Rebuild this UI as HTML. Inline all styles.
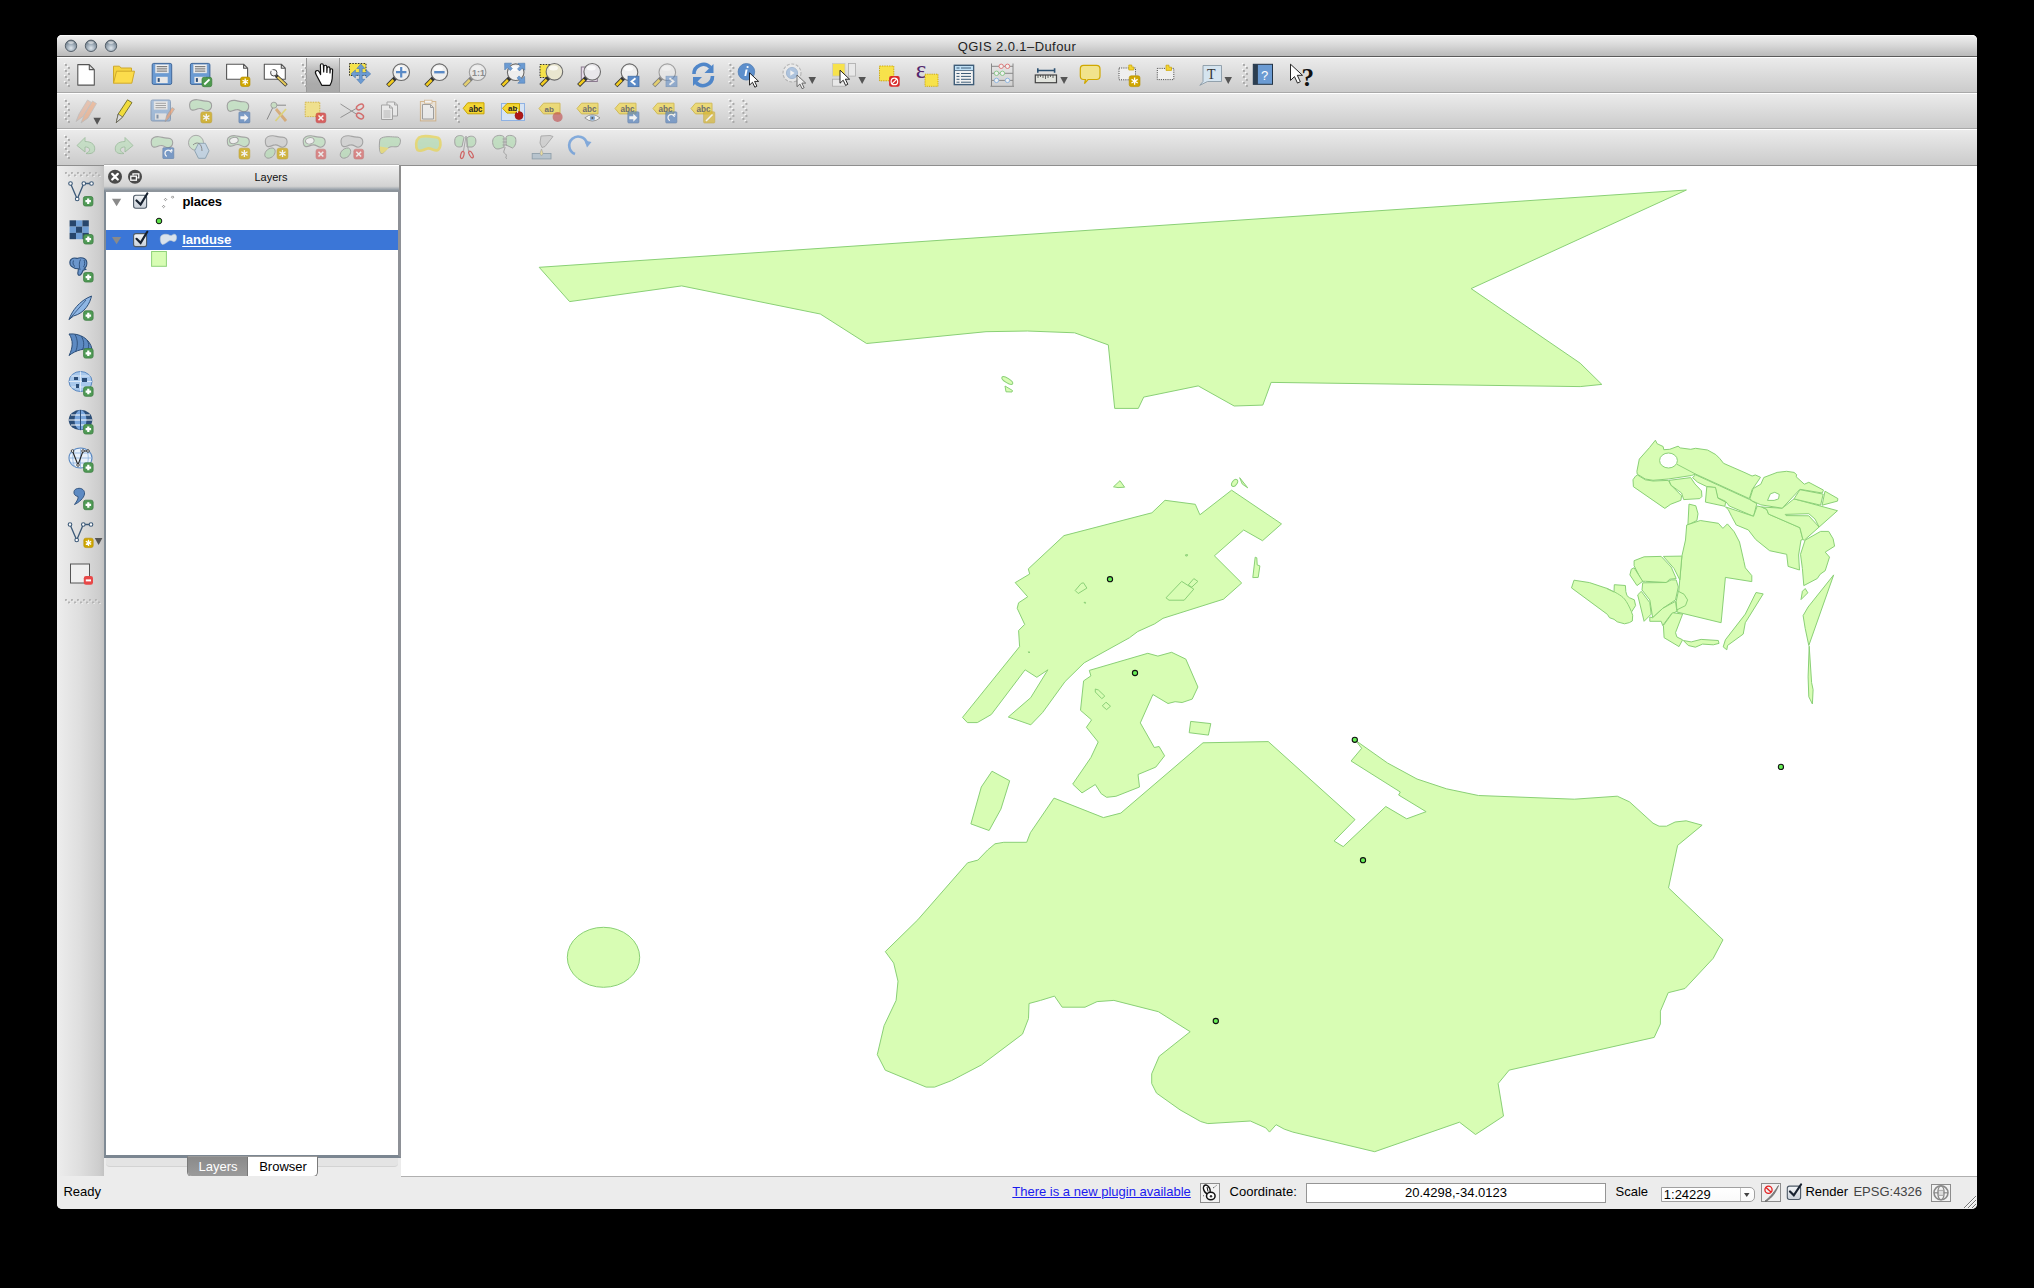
<!DOCTYPE html>
<html><head><meta charset="utf-8">
<style>
*{margin:0;padding:0;box-sizing:border-box}
html,body{width:2034px;height:1288px;overflow:hidden;background:#000;font-family:"Liberation Sans",sans-serif}
.a{position:absolute}
.t13{font-size:13px;line-height:15px;white-space:nowrap}
</style></head>
<body>
<!-- window background -->
<div class="a" style="left:57px;top:35px;width:1920px;height:1174px;background:#ececec;border-radius:5px 5px 5px 5px"></div>
<!-- title bar -->
<div class="a" style="left:57px;top:35px;width:1920px;height:22px;border-radius:5px 5px 0 0;background:linear-gradient(#f0f0f0,#dadada 45%,#bababa);border-bottom:1px solid #5a5a5a;box-shadow:inset 0 1px 0 #fbfbfb"></div>
<svg class="a" style="left:57px;top:35px" width="70" height="22" viewBox="0 0 70 22">
  <defs><radialGradient id="tl" cx="50%" cy="70%" r="60%"><stop offset="0" stop-color="#dfe6ec"/><stop offset="0.55" stop-color="#a3b0bc"/><stop offset="1" stop-color="#75838f"/></radialGradient></defs>
  <g fill="url(#tl)" stroke="#56616b" stroke-width="1"><circle cx="14" cy="10.8" r="5.7"/><circle cx="34" cy="10.8" r="5.7"/><circle cx="54" cy="10.8" r="5.7"/></g>
  <g fill="#fff" opacity="0.55"><ellipse cx="14" cy="7.6" rx="3" ry="1.3"/><ellipse cx="34" cy="7.6" rx="3" ry="1.3"/><ellipse cx="54" cy="7.6" rx="3" ry="1.3"/></g>
</svg>
<div class="a t13" style="left:57px;top:39px;width:1920px;text-align:center;color:#1e1e1e;letter-spacing:0.42px">QGIS 2.0.1–Dufour</div>

<!-- toolbar rows -->
<div class="a" style="left:57px;top:57px;width:1920px;height:36px;background:linear-gradient(#ececec,#cbcbcb);border-bottom:1px solid #a9a9a9;box-shadow:inset 0 1px 0 #fff"></div>
<div class="a" style="left:57px;top:93px;width:1920px;height:36px;background:linear-gradient(#ececec,#cbcbcb);border-bottom:1px solid #a9a9a9;box-shadow:inset 0 1px 0 #fff"></div>
<div class="a" style="left:57px;top:129px;width:1920px;height:37px;background:linear-gradient(#ececec,#cbcbcb);border-bottom:1px solid #8e8e8e;box-shadow:inset 0 1px 0 #fff"></div>
<!-- pressed pan button -->
<div class="a" style="left:306px;top:58px;width:34px;height:34px;background:linear-gradient(#e2e2e2,#bdbdbd 35%,#ababab 75%,#a9a9a9);box-shadow:inset 1px 0 0 #9a9a9a,inset -1px 0 0 #9a9a9a"></div>
<!-- checked label pin button -->
<div class="a" style="left:501px;top:103px;width:24px;height:18px;background:#d6e3f3;border:1px solid #8fb2e3"></div>


<!-- left vertical toolbar -->
<div class="a" style="left:57px;top:166px;width:47px;height:1011px;background:linear-gradient(90deg,#ededed,#dedede 50%,#cdcdcd 90%,#c2c2c2)"></div>

<!-- dock title -->
<div class="a" style="left:104px;top:164px;width:295px;height:26px;background:linear-gradient(#f0f0f0,#d2d2d2 85%,#8f99a3);box-shadow:inset 0 1px 0 #fff;border-top:1px solid #b2b2b2"></div>
<div class="a" style="left:399px;top:165px;width:2px;height:26px;background:#8e8e8e"></div>
<!-- tree -->
<div class="a" style="left:104px;top:190px;width:297px;height:968px;background:#fff;border-style:solid;border-color:#8e959c #8e9197 #7b8691 #7f8a94;border-width:2px 3px 3px 2px"></div>
<!-- tab pane -->
<div class="a" style="left:104px;top:1158px;width:297px;height:19px;background:#ececec"></div>
<div class="a" style="left:106px;top:1158px;width:292px;height:9px;background:#e4e4e4;border-bottom:1px solid #d3d3d3;border-radius:0 0 4px 4px"></div>

<svg class="a" style="left:105px;top:169px" width="40" height="16" viewBox="0 0 40 16">
  <circle cx="10" cy="7.7" r="7" fill="#4a4a4a"/>
  <path d="M7.2 4.9 L12.8 10.5 M12.8 4.9 L7.2 10.5" stroke="#fff" stroke-width="2.2" stroke-linecap="round"/>
  <circle cx="30" cy="7.7" r="7" fill="#4a4a4a"/>
  <rect x="25.8" y="7.2" width="5.6" height="4" fill="none" stroke="#fff" stroke-width="1.3"/>
  <path d="M28 6.4 V4.8 H33.8 V8.8 H32.4" fill="none" stroke="#fff" stroke-width="1.3"/>
</svg>
<div class="a" style="left:143px;top:170px;width:256px;text-align:center;font-size:11px;line-height:14px;color:#111">Layers</div>

<!-- tree rows -->
<div class="a" style="left:106px;top:230px;width:292px;height:20px;background:#3b76d7"></div>
<svg class="a" style="left:106px;top:192px" width="140" height="80" viewBox="0 0 140 80">
  <defs><linearGradient id="cbg" x1="0" y1="0" x2="0" y2="1"><stop offset="0" stop-color="#f4f6f8"/><stop offset="1" stop-color="#c9d0d8"/></linearGradient></defs>
  <path d="M6 6.7 H15.2 L10.6 14.2Z" fill="#8a8a8a"/>
  <path d="M6 44.9 H15.2 L10.6 52.2Z" fill="#8a8a8a"/>
  <rect x="27.6" y="3.3" width="13" height="13" rx="2.2" fill="url(#cbg)" stroke="#4d5966" stroke-width="1.1"/>
  <path d="M30.5 8.5 L34.6 12.6 L41.3 1.5" fill="none" stroke="#182230" stroke-width="2.2" stroke-linecap="round"/>
  <rect x="27.6" y="41.6" width="13" height="13" rx="2.2" fill="url(#cbg)" stroke="#4d5966" stroke-width="1.1"/>
  <path d="M30.5 46.8 L34.6 50.9 L41.3 39.8" fill="none" stroke="#182230" stroke-width="2.2" stroke-linecap="round"/>
  <g fill="none" stroke="#666" stroke-width="0.7"><path d="M58.3 7.5 l1.2 -1.2 l1.2 1.2 l-1.2 1.2z"/><path d="M65.4 5.1 l1.2 -1.2 l1.2 1.2 l-1.2 1.2z"/><path d="M56.4 14.5 l1.2 -1.2 l1.2 1.2 l-1.2 1.2z"/></g>
  <circle cx="53" cy="29" r="2.8" fill="#5ee04a" stroke="#111" stroke-width="1"/>
  <path d="M55 44 C57 41.5 62 42 64 43.5 C66 44 67 41.5 69 42.3 C71 43 71 47 69.5 49 C67.5 50.5 66 48 64 48.5 C62 49 59 52.5 56.5 52.5 C54.5 52 53.5 46 55 44Z" fill="#d9e2ec" stroke="#b9c6d2" stroke-width="0.6"/>
  <rect x="45.6" y="59.5" width="14.8" height="14.8" fill="#d8fdb4" stroke="#8fd27a" stroke-width="1"/>
</svg>
<div class="a t13" style="left:182.6px;top:194px;font-weight:bold;color:#000;letter-spacing:-0.2px">places</div>
<div class="a t13" style="left:182.2px;top:232px;font-weight:bold;color:#fff;text-decoration:underline;text-underline-offset:2px">landuse</div>

<!-- dock tabs -->
<div class="a" style="left:187px;top:1156px;width:131px;height:21px;border:1px solid #7a7a7a;border-top-color:#9a9a9a;border-radius:0 0 5px 5px;background:#fff;overflow:hidden">
  <div class="a" style="left:0;top:0;width:60px;height:21px;background:linear-gradient(#8a8a8a,#9d9d9d);border-right:1px solid #777"></div>
  <div class="a t13" style="left:0;top:2px;width:60px;text-align:center;color:#fff">Layers</div>
  <div class="a t13" style="left:60px;top:2px;width:70px;text-align:center;color:#000">Browser</div>
</div>

<svg class="a" style="left:0;top:0;pointer-events:none" width="2034" height="620" viewBox="0 0 2034 620"><rect x="63.9" y="62.9" width="1.6" height="1.6" fill="#fff" opacity="0.9"/><rect x="64.9" y="63.9" width="2" height="2" fill="#a8a8a8"/><rect x="66.9" y="65.9" width="1.6" height="1.6" fill="#fff" opacity="0.9"/><rect x="67.9" y="66.9" width="2" height="2" fill="#a8a8a8"/><rect x="63.9" y="68.9" width="1.6" height="1.6" fill="#fff" opacity="0.9"/><rect x="64.9" y="69.9" width="2" height="2" fill="#a8a8a8"/><rect x="66.9" y="71.9" width="1.6" height="1.6" fill="#fff" opacity="0.9"/><rect x="67.9" y="72.9" width="2" height="2" fill="#a8a8a8"/><rect x="63.9" y="74.9" width="1.6" height="1.6" fill="#fff" opacity="0.9"/><rect x="64.9" y="75.9" width="2" height="2" fill="#a8a8a8"/><rect x="66.9" y="77.9" width="1.6" height="1.6" fill="#fff" opacity="0.9"/><rect x="67.9" y="78.9" width="2" height="2" fill="#a8a8a8"/><rect x="63.9" y="80.9" width="1.6" height="1.6" fill="#fff" opacity="0.9"/><rect x="64.9" y="81.9" width="2" height="2" fill="#a8a8a8"/><rect x="66.9" y="83.9" width="1.6" height="1.6" fill="#fff" opacity="0.9"/><rect x="67.9" y="84.9" width="2" height="2" fill="#a8a8a8"/><path d="M77.8 64.6 H89.3 L94.3 69.6 V85.1 H77.8 Z M89.3 64.6 V69.6 H94.3" fill="#fff" stroke="#555" stroke-width="1.1" stroke-linejoin="round" opacity="1.00"/><path d="M113.5 83.2 L113.5 66.2 H119.5 L121 68 H131.5 V71" fill="#f5d442" stroke="#cfa92a" stroke-width="1"/><path d="M113.5 83.2 L116.5 71.2 H134.5 L131.8 83.2 Z" fill="#fcdc4c" stroke="#cfa92a" stroke-width="1"/><g opacity="1.00"><rect x="152.2" y="63.4" width="19.5" height="21.0" rx="1.5" fill="#6b9bd3" stroke="#40679a" stroke-width="1"/><rect x="155.2" y="64.6" width="13.5" height="8.4" fill="#f1f1f1" stroke="#b9c6d6" stroke-width="0.5"/><path d="M156.7 66.7 h10.5" stroke="#555" stroke-width="0.9"/><path d="M156.7 68.9 h10.5" stroke="#555" stroke-width="0.9"/><path d="M156.7 71.1 h10.5" stroke="#555" stroke-width="0.9"/><rect x="156.2" y="76.8" width="11.5" height="6.3" fill="#e8e8e8"/><rect x="157.7" y="78.1" width="2" height="3.8" fill="#30507a"/></g><g opacity="1.00"><rect x="190.4" y="63.4" width="19.5" height="21.0" rx="1.5" fill="#6b9bd3" stroke="#40679a" stroke-width="1"/><rect x="193.4" y="64.6" width="13.5" height="8.4" fill="#f1f1f1" stroke="#b9c6d6" stroke-width="0.5"/><path d="M194.9 66.7 h10.5" stroke="#555" stroke-width="0.9"/><path d="M194.9 68.9 h10.5" stroke="#555" stroke-width="0.9"/><path d="M194.9 71.1 h10.5" stroke="#555" stroke-width="0.9"/><rect x="194.4" y="76.8" width="11.5" height="6.3" fill="#e8e8e8"/><rect x="195.9" y="78.1" width="2" height="3.8" fill="#30507a"/></g><rect x="202" y="77.3" width="9.8" height="9.4" rx="2" fill="#4e9a4e" stroke="#3b7c3b" stroke-width="0.7"/><path d="M204.3 84.5 L209.5 79.3" stroke="#fff" stroke-width="1.9"/><path d="M226.6 64.2 H243.6 L247.6 68.2 V79.2 H226.6 Z M243.6 64.2 V68.2 H247.6" fill="#fff" stroke="#555" stroke-width="1.1" stroke-linejoin="round" opacity="1.00"/><g opacity="1.00"><rect x="240.5" y="77.0" width="9.5" height="9.5" rx="2" fill="#cfa600" stroke="#b48f00" stroke-width="0.6"/><path d="M245.2 78.6 v6.3 M242.5 80.2 l5.5 3.1 M242.5 83.3 l5.5 -3.1" stroke="#fff" stroke-width="1.3"/></g><path d="M264.3 64.2 H281.3 L285.3 68.2 V79.2 H264.3 Z M281.3 64.2 V68.2 H285.3" fill="#fff" stroke="#555" stroke-width="1.1" stroke-linejoin="round" opacity="1.00"/><path d="M276 75.5 L286.5 85.5" stroke="#333" stroke-width="3.4"/><path d="M277.5 77 L286 85" stroke="#e8cc5a" stroke-width="2"/><circle cx="273.8" cy="72.8" r="3.2" fill="#f4f4f4" stroke="#444" stroke-width="1"/><path d="M271.5 70 l2 2.2" stroke="#fff" stroke-width="1.6"/><rect x="300.9" y="62.9" width="1.6" height="1.6" fill="#fff" opacity="0.9"/><rect x="301.9" y="63.9" width="2" height="2" fill="#a8a8a8"/><rect x="303.9" y="65.9" width="1.6" height="1.6" fill="#fff" opacity="0.9"/><rect x="304.9" y="66.9" width="2" height="2" fill="#a8a8a8"/><rect x="300.9" y="68.9" width="1.6" height="1.6" fill="#fff" opacity="0.9"/><rect x="301.9" y="69.9" width="2" height="2" fill="#a8a8a8"/><rect x="303.9" y="71.9" width="1.6" height="1.6" fill="#fff" opacity="0.9"/><rect x="304.9" y="72.9" width="2" height="2" fill="#a8a8a8"/><rect x="300.9" y="74.9" width="1.6" height="1.6" fill="#fff" opacity="0.9"/><rect x="301.9" y="75.9" width="2" height="2" fill="#a8a8a8"/><rect x="303.9" y="77.9" width="1.6" height="1.6" fill="#fff" opacity="0.9"/><rect x="304.9" y="78.9" width="2" height="2" fill="#a8a8a8"/><rect x="300.9" y="80.9" width="1.6" height="1.6" fill="#fff" opacity="0.9"/><rect x="301.9" y="81.9" width="2" height="2" fill="#a8a8a8"/><rect x="303.9" y="83.9" width="1.6" height="1.6" fill="#fff" opacity="0.9"/><rect x="304.9" y="84.9" width="2" height="2" fill="#a8a8a8"/><path d="M321.8 85.3 L316.2 74.8 C315.2 73 315 71.6 316.3 70.8 C317.6 70 318.8 71 319.6 72.6 L320.6 74.6 L320.4 65.2 C320.4 63.4 323.2 63.2 323.4 65.2 L323.7 72 L323.9 66.6 C324 64.8 326.7 64.8 326.8 66.6 L326.9 72.4 L327.1 68.2 C327.2 66.4 329.9 66.5 329.9 68.3 L330 73 L330.2 69.9 C330.3 68.3 332.8 68.4 332.6 70.3 L332.2 78.5 C332 81.5 331 83.5 330 85.3 Z" fill="#fff" stroke="#111" stroke-width="1.2" stroke-linejoin="round"/><rect x="349.5" y="63.5" width="16.5" height="12" fill="#f5e24a" stroke="#222" stroke-width="0.9" stroke-dasharray="1.6 1.2"/><path d="M360.8 64 l-4 4.5 h2.6 v4 h-4 v-2.6 l-4.5 4 l4.5 4 v-2.6 h4 v4 h-2.6 l4 4.5 l4 -4.5 h-2.6 v-4 h4 v2.6 l4.5 -4 l-4.5 -4 v2.6 h-4 v-4 h2.6 z" fill="#6b9bd3" stroke="#4a78b0" stroke-width="0.6"/><g opacity="1.00"><path d="M395.8 77.6 L387.6 85.8" stroke="#333" stroke-width="4.2" stroke-linecap="butt"/><path d="M393.4 80.0 L388.1 85.3" stroke="#f2cc1e" stroke-width="2.6"/><circle cx="401.2" cy="72.2" r="8.3" fill="#eeeeee" stroke="#6b6b6b" stroke-width="1.1"/><ellipse cx="400.2" cy="68.5" rx="4.6" ry="2.5" fill="#fff" opacity="0.7"/></g><path d="M396 72.2 h10.4 M401.2 67 v10.4" stroke="#5a8ac6" stroke-width="2.2"/><g opacity="1.00"><path d="M434.0 77.6 L425.8 85.8" stroke="#333" stroke-width="4.2" stroke-linecap="butt"/><path d="M431.6 80.0 L426.3 85.3" stroke="#f2cc1e" stroke-width="2.6"/><circle cx="439.4" cy="72.2" r="8.3" fill="#eeeeee" stroke="#6b6b6b" stroke-width="1.1"/><ellipse cx="438.4" cy="68.5" rx="4.6" ry="2.5" fill="#fff" opacity="0.7"/></g><path d="M434.2 72.2 h10.4" stroke="#5a8ac6" stroke-width="2.4"/><g opacity="0.55"><path d="M472.2 77.6 L464.0 85.8" stroke="#333" stroke-width="4.2" stroke-linecap="butt"/><path d="M469.8 80.0 L464.5 85.3" stroke="#f2cc1e" stroke-width="2.6"/><circle cx="477.6" cy="72.2" r="8.3" fill="#eeeeee" stroke="#6b6b6b" stroke-width="1.1"/><ellipse cx="476.6" cy="68.5" rx="4.6" ry="2.5" fill="#fff" opacity="0.7"/></g><text x="472" y="76" font-family="Liberation Sans" font-weight="bold" font-size="9" fill="#777" opacity="0.8">1:1</text><g opacity="1.00"><path d="M510.3 77.6 L502.1 85.8" stroke="#333" stroke-width="4.2" stroke-linecap="butt"/><path d="M507.9 80.0 L502.6 85.3" stroke="#f2cc1e" stroke-width="2.6"/><circle cx="515.7" cy="72.2" r="8.3" fill="#eeeeee" stroke="#6b6b6b" stroke-width="1.1"/><ellipse cx="514.7" cy="68.5" rx="4.6" ry="2.5" fill="#fff" opacity="0.7"/></g><g fill="#6b9bd3" stroke="#4a78b0" stroke-width="0.6"><path d="M504.6 63.2 h7 l-2.3 2.3 l3 3 l-2 2 l-3 -3 l-2.5 2.5z"/><path d="M524.8 63.2 v7 l-2.3 -2.3 l-3 3 l-2 -2 l3 -3 l-2.5 -2.5z"/><path d="M524.8 83.2 h-7 l2.3 -2.3 l-3 -3 l2 -2 l3 3 l2.5 -2.5z"/></g><rect x="540" y="64.5" width="18" height="13" fill="#f5e24a" stroke="#222" stroke-width="0.9" stroke-dasharray="1.6 1.2"/><g opacity="1.00"><path d="M549.0 77.2 L540.8 85.4" stroke="#333" stroke-width="4.2" stroke-linecap="butt"/><path d="M546.6 79.6 L541.3 84.9" stroke="#f2cc1e" stroke-width="2.6"/><circle cx="554.4" cy="71.8" r="8.3" fill="#e9e6cf" stroke="#6b6b6b" stroke-width="1.1"/><ellipse cx="553.4" cy="68.1" rx="4.6" ry="2.5" fill="#fff" opacity="0.7"/></g><rect x="581.3" y="67" width="16" height="14.5" fill="#e5d9e8" stroke="#8a7a8e" stroke-width="1"/><g opacity="1.00"><path d="M586.8 77.2 L578.6 85.4" stroke="#333" stroke-width="4.2" stroke-linecap="butt"/><path d="M584.4 79.6 L579.1 84.9" stroke="#f2cc1e" stroke-width="2.6"/><circle cx="592.2" cy="71.8" r="8.3" fill="#e8e6ea" stroke="#6b6b6b" stroke-width="1.1"/><ellipse cx="591.2" cy="68.1" rx="4.6" ry="2.5" fill="#fff" opacity="0.7"/></g><g opacity="1.00"><path d="M624.1 77.6 L615.9 85.8" stroke="#333" stroke-width="4.2" stroke-linecap="butt"/><path d="M621.7 80.0 L616.4 85.3" stroke="#f2cc1e" stroke-width="2.6"/><circle cx="629.5" cy="72.2" r="8.3" fill="#eeeeee" stroke="#6b6b6b" stroke-width="1.1"/><ellipse cx="628.5" cy="68.5" rx="4.6" ry="2.5" fill="#fff" opacity="0.7"/></g><rect x="628" y="76.2" width="11" height="10.5" fill="#5b8ac7" stroke="#3f6ca5" stroke-width="0.7"/><path d="M635.5 78.3 l-4 3.2 l4 3.2" fill="none" stroke="#fff" stroke-width="1.8"/><g opacity="0.55"><path d="M661.9 77.6 L653.7 85.8" stroke="#333" stroke-width="4.2" stroke-linecap="butt"/><path d="M659.5 80.0 L654.2 85.3" stroke="#f2cc1e" stroke-width="2.6"/><circle cx="667.3" cy="72.2" r="8.3" fill="#eeeeee" stroke="#6b6b6b" stroke-width="1.1"/><ellipse cx="666.3" cy="68.5" rx="4.6" ry="2.5" fill="#fff" opacity="0.7"/></g><g opacity="0.55"><rect x="666" y="76.2" width="11" height="10.5" fill="#5b8ac7" stroke="#3f6ca5" stroke-width="0.7"/><path d="M669.5 78.3 l4 3.2 l-4 3.2" fill="none" stroke="#fff" stroke-width="1.8"/></g><path d="M694 74 A9.5 9.5 0 0 1 710.5 67.5" fill="none" stroke="#4f86c9" stroke-width="3.6"/><path d="M713.5 64 v9 h-9z" fill="#4f86c9"/><path d="M712.5 76 A9.5 9.5 0 0 1 696 82.5" fill="none" stroke="#4f86c9" stroke-width="3.6"/><path d="M693 86 v-9 h9z" fill="#4f86c9"/><rect x="728.4" y="62.9" width="1.6" height="1.6" fill="#fff" opacity="0.9"/><rect x="729.4" y="63.9" width="2" height="2" fill="#a8a8a8"/><rect x="731.4" y="65.9" width="1.6" height="1.6" fill="#fff" opacity="0.9"/><rect x="732.4" y="66.9" width="2" height="2" fill="#a8a8a8"/><rect x="728.4" y="68.9" width="1.6" height="1.6" fill="#fff" opacity="0.9"/><rect x="729.4" y="69.9" width="2" height="2" fill="#a8a8a8"/><rect x="731.4" y="71.9" width="1.6" height="1.6" fill="#fff" opacity="0.9"/><rect x="732.4" y="72.9" width="2" height="2" fill="#a8a8a8"/><rect x="728.4" y="74.9" width="1.6" height="1.6" fill="#fff" opacity="0.9"/><rect x="729.4" y="75.9" width="2" height="2" fill="#a8a8a8"/><rect x="731.4" y="77.9" width="1.6" height="1.6" fill="#fff" opacity="0.9"/><rect x="732.4" y="78.9" width="2" height="2" fill="#a8a8a8"/><rect x="728.4" y="80.9" width="1.6" height="1.6" fill="#fff" opacity="0.9"/><rect x="729.4" y="81.9" width="2" height="2" fill="#a8a8a8"/><rect x="731.4" y="83.9" width="1.6" height="1.6" fill="#fff" opacity="0.9"/><rect x="732.4" y="84.9" width="2" height="2" fill="#a8a8a8"/><circle cx="746.4" cy="71.8" r="8.3" fill="#5d8fcc" stroke="#4a78b0" stroke-width="0.7"/><path d="M745.6 69.5 h2 l-1.4 6.5 h-1.8z" fill="#fff"/><circle cx="747.6" cy="67" r="1.1" fill="#fff"/><path d="M749.5 72.8 l0 12.3 l3.0 -2.8 l2.3 4.9 l2.1 -1.0 l-2.3 -4.8 l4.0 0.0 z" fill="#fff" stroke="#111" stroke-width="0.9" stroke-linejoin="round" opacity="1.00"/><g opacity="0.6"><circle cx="792" cy="73" r="9" fill="#efefef" stroke="#999" stroke-width="1.1" stroke-dasharray="3 1.6"/><circle cx="792" cy="73" r="5.6" fill="#8fb3de" stroke="#6d93c3" stroke-width="0.8"/><path d="M790.3 70.3 v5.4 l4.4 -2.7z" fill="#fff"/></g><path d="M797.0 75.0 l0 11.7 l2.9 -2.7 l2.2 4.7 l2.0 -1.0 l-2.2 -4.6 l3.8 0.0 z" fill="#fff" stroke="#111" stroke-width="0.9" stroke-linejoin="round" opacity="0.60"/><path d="M808.5 77.0 h7.5 l-3.75 7z" fill="#555"/><rect x="832.5" y="63.5" width="12.5" height="12.6" fill="#f7e24b" stroke="#c8c8c8" stroke-width="0.8"/><rect x="848.6" y="63.5" width="7" height="12.6" fill="#e8e8e8" stroke="#aaa" stroke-width="0.8"/><rect x="832.5" y="79.2" width="13" height="7" fill="#e8e8e8" stroke="#aaa" stroke-width="0.8"/><path d="M840.0 70.2 l0 13.0 l3.2 -3.0 l2.4 5.2 l2.2 -1.1 l-2.4 -5.1 l4.2 0.0 z" fill="#fff" stroke="#111" stroke-width="0.9" stroke-linejoin="round" opacity="1.00"/><path d="M858.4 77.0 h7.5 l-3.75 7z" fill="#555"/><rect x="879.5" y="66" width="14.3" height="14.8" fill="#f7e24b" stroke="#c9a400" stroke-width="0.9" stroke-dasharray="1.4 1"/><rect x="889.1" y="76.1" width="10.6" height="10.6" rx="2" fill="#d92b2b"/><circle cx="894.4" cy="81.4" r="3.3" fill="none" stroke="#fff" stroke-width="1.2"/><path d="M892 83.8 l4.8 -4.8" stroke="#fff" stroke-width="1.2"/><text x="915.8" y="78" font-family="Liberation Serif" font-size="25" fill="#54286e">ε</text><rect x="925" y="74.2" width="13" height="12.1" fill="#f7e24b" stroke="#c9a400" stroke-width="0.9" stroke-dasharray="1.2 1"/><rect x="954.3" y="65.3" width="19.3" height="19.3" fill="#f2f2f2" stroke="#3f5d78" stroke-width="1.4"/><rect x="955" y="66" width="18" height="4" fill="#bfe0f6"/><path d="M954.3 70.5 h19.3" stroke="#3f5d78" stroke-width="0.8"/><path d="M956.5 73.5 h3 M961 73.5 h10" stroke="#3f5d78" stroke-width="1"/><path d="M956.5 76.4 h3 M961 76.4 h10" stroke="#3f5d78" stroke-width="1"/><path d="M956.5 79.3 h3 M961 79.3 h10" stroke="#3f5d78" stroke-width="1"/><path d="M956.5 82.2 h3 M961 82.2 h10" stroke="#3f5d78" stroke-width="1"/><path d="M956.5 68 h3 M961 68 h10" stroke="#3f5d78" stroke-width="1.2"/><g fill="none" stroke="#888" stroke-width="1"><path d="M991.5 63.5 V86 M1013 63.5 V86 M990.5 86.3 h23.5"/><path d="M991.5 66.3 h21.5 M991.5 73.3 h21.5 M991.5 80.4 h21.5"/></g><circle cx="1001.2" cy="66.3" r="2.2" fill="#f0f0f0" stroke="#e07a7a" stroke-width="1"/><circle cx="1007.5" cy="66.3" r="2.2" fill="#f0f0f0" stroke="#e07a7a" stroke-width="1"/><circle cx="996.5" cy="73.3" r="2.2" fill="#f0f0f0" stroke="#8cc88c" stroke-width="1"/><circle cx="1002.4" cy="73.3" r="2.2" fill="#f0f0f0" stroke="#8cc88c" stroke-width="1"/><circle cx="996.5" cy="80.4" r="2.2" fill="#f0f0f0" stroke="#8fb6e0" stroke-width="1"/><circle cx="1007.5" cy="80.4" r="2.2" fill="#f0f0f0" stroke="#8fb6e0" stroke-width="1"/><path d="M1037.8 68.2 v4.6 M1054.6 68.2 v4.6 M1037.8 70.5 h16.8" stroke="#2c5070" stroke-width="1.6"/><rect x="1035.3" y="75" width="21.2" height="7.7" fill="#e2e4de" stroke="#444" stroke-width="1.2"/><path d="M1038 75 v3 M1040.5 75 v2 M1043 75 v3 M1045.5 75 v4 M1048 75 v3 M1050.5 75 v2 M1053 75 v3" stroke="#444" stroke-width="0.8"/><path d="M1060.3 77.0 h7.5 l-3.75 7z" fill="#555"/><path d="M1083.5 65.4 H1096.5 C1099 65.4 1100 66.5 1100 69 V76 C1100 78.5 1099 79.5 1096.5 79.5 H1088 L1084.5 83.6 L1085.5 79.5 H1083.5 C1081 79.5 1080.3 78.5 1080.3 76 V69 C1080.3 66.5 1081 65.4 1083.5 65.4Z" fill="#f1e38c" stroke="#d0a800" stroke-width="1.2"/><rect x="1119" y="68" width="16.5" height="11.8" fill="#efefef" stroke="#333" stroke-width="0.9" stroke-dasharray="1 1.2"/><path d="M1128.8 65 h3 v2 h2 v3 h-5z" fill="#f3d433" stroke="#c9a400" stroke-width="0.7"/><g opacity="1.00"><rect x="1129.2" y="75.8" width="10.8" height="10.8" rx="2" fill="#cfa600" stroke="#b48f00" stroke-width="0.6"/><path d="M1134.6 77.6 v7.1 M1131.5 79.4 l6.2 3.6 M1131.5 83.0 l6.2 -3.6" stroke="#fff" stroke-width="1.3"/></g><rect x="1157.3" y="68.4" width="16.5" height="11.2" fill="#efefef" stroke="#333" stroke-width="0.9" stroke-dasharray="1 1.2"/><path d="M1166 65.2 h3 v2 h2.5 v3.2 h-5.5z" fill="#f3d433" stroke="#c9a400" stroke-width="0.7"/><path d="M1203 65.5 H1221.5 V81.5 H1207.5 L1199.8 85.3 L1203 81.5 Z" fill="#d5e4ef" stroke="#8a9aa6" stroke-width="0.9"/><text x="1207" y="79" font-family="Liberation Serif" font-size="14" fill="#333">T</text><path d="M1224.5 77.0 h7.5 l-3.75 7z" fill="#555"/><rect x="1241.9" y="62.9" width="1.6" height="1.6" fill="#fff" opacity="0.9"/><rect x="1242.9" y="63.9" width="2" height="2" fill="#a8a8a8"/><rect x="1244.9" y="65.9" width="1.6" height="1.6" fill="#fff" opacity="0.9"/><rect x="1245.9" y="66.9" width="2" height="2" fill="#a8a8a8"/><rect x="1241.9" y="68.9" width="1.6" height="1.6" fill="#fff" opacity="0.9"/><rect x="1242.9" y="69.9" width="2" height="2" fill="#a8a8a8"/><rect x="1244.9" y="71.9" width="1.6" height="1.6" fill="#fff" opacity="0.9"/><rect x="1245.9" y="72.9" width="2" height="2" fill="#a8a8a8"/><rect x="1241.9" y="74.9" width="1.6" height="1.6" fill="#fff" opacity="0.9"/><rect x="1242.9" y="75.9" width="2" height="2" fill="#a8a8a8"/><rect x="1244.9" y="77.9" width="1.6" height="1.6" fill="#fff" opacity="0.9"/><rect x="1245.9" y="78.9" width="2" height="2" fill="#a8a8a8"/><rect x="1241.9" y="80.9" width="1.6" height="1.6" fill="#fff" opacity="0.9"/><rect x="1242.9" y="81.9" width="2" height="2" fill="#a8a8a8"/><rect x="1244.9" y="83.9" width="1.6" height="1.6" fill="#fff" opacity="0.9"/><rect x="1245.9" y="84.9" width="2" height="2" fill="#a8a8a8"/><rect x="1253.3" y="64.3" width="19.2" height="20" fill="#6b9bd3" stroke="#223344" stroke-width="1"/><rect x="1253.3" y="64.3" width="4.6" height="20" fill="#2c3e50"/><text x="1261" y="79.5" font-family="Liberation Sans" font-size="13" fill="#fff">?</text><path d="M1290.5 64.2 l0 16.2 l4.0 -3.8 l3.0 6.5 l2.8 -1.4 l-3.0 -6.4 l5.2 0.0 z" fill="#fff" stroke="#111" stroke-width="0.9" stroke-linejoin="round" opacity="1.00"/><text x="1301.5" y="85.5" font-family="Liberation Serif" font-weight="bold" font-size="25" fill="#111">?</text><rect x="63.9" y="98.9" width="1.6" height="1.6" fill="#fff" opacity="0.9"/><rect x="64.9" y="99.9" width="2" height="2" fill="#a8a8a8"/><rect x="66.9" y="101.9" width="1.6" height="1.6" fill="#fff" opacity="0.9"/><rect x="67.9" y="102.9" width="2" height="2" fill="#a8a8a8"/><rect x="63.9" y="104.9" width="1.6" height="1.6" fill="#fff" opacity="0.9"/><rect x="64.9" y="105.9" width="2" height="2" fill="#a8a8a8"/><rect x="66.9" y="107.9" width="1.6" height="1.6" fill="#fff" opacity="0.9"/><rect x="67.9" y="108.9" width="2" height="2" fill="#a8a8a8"/><rect x="63.9" y="110.9" width="1.6" height="1.6" fill="#fff" opacity="0.9"/><rect x="64.9" y="111.9" width="2" height="2" fill="#a8a8a8"/><rect x="66.9" y="113.9" width="1.6" height="1.6" fill="#fff" opacity="0.9"/><rect x="67.9" y="114.9" width="2" height="2" fill="#a8a8a8"/><rect x="63.9" y="116.9" width="1.6" height="1.6" fill="#fff" opacity="0.9"/><rect x="64.9" y="117.9" width="2" height="2" fill="#a8a8a8"/><rect x="66.9" y="119.9" width="1.6" height="1.6" fill="#fff" opacity="0.9"/><rect x="67.9" y="120.9" width="2" height="2" fill="#a8a8a8"/><g opacity="0.55"><path d="M76 121.5 L79 114 L87.5 100 L91.5 102.5 L83 116.5 Z" fill="#e8a888" stroke="#aaa" stroke-width="0.8"/><path d="M81 123 L84 115.5 L92.5 101 L96.5 103.5 L88 118 Z" fill="#f0a070" stroke="#aaa" stroke-width="0.8"/></g><path d="M93.4 117.8 h7.5 l-3.75 7z" fill="#555"/><path d="M116.3 122.6 L118.2 114 L127.5 99.8 L132 102.6 L122.6 117 Z" fill="#f1dc3c" stroke="#6d6a2a" stroke-width="0.9"/><path d="M116.3 122.6 L118.2 114 L122.6 117 Z" fill="#ddd" stroke="#555" stroke-width="0.7"/><g opacity="0.50"><rect x="151.0" y="100.0" width="19.5" height="21.0" rx="1.5" fill="#6b9bd3" stroke="#40679a" stroke-width="1"/><rect x="154.0" y="101.2" width="13.5" height="8.4" fill="#f1f1f1" stroke="#b9c6d6" stroke-width="0.5"/><path d="M155.5 103.3 h10.5" stroke="#555" stroke-width="0.9"/><path d="M155.5 105.5 h10.5" stroke="#555" stroke-width="0.9"/><path d="M155.5 107.7 h10.5" stroke="#555" stroke-width="0.9"/><rect x="155.0" y="113.4" width="11.5" height="6.3" fill="#e8e8e8"/><rect x="156.5" y="114.7" width="2" height="3.8" fill="#30507a"/></g><path d="M165 122 L166.5 116 L172 107.5 L174.5 109 L169 117.8Z" fill="#f0a070" stroke="#999" stroke-width="0.7" opacity="0.7"/><g opacity="0.75"><path d="M189.6 104.5 C189.6 100.6 194.0 99.5 197.3 99.7 C200.6 99.9 202.4 101.2 206.1 101.1 C210.5 101.0 211.6 103.4 211.6 105.7 C211.6 108.5 209.4 110.7 206.8 110.7 C203.9 110.7 202.8 108.2 199.5 108.5 C196.2 108.7 195.1 110.5 192.2 110.1 C190.0 109.8 189.6 107.3 189.6 104.5Z" fill="#bddfbd" stroke="#8a8a8a" stroke-width="1.1"/></g><g opacity="0.70"><rect x="200.8" y="111.9" width="11.0" height="11.0" rx="2" fill="#cfa600" stroke="#b48f00" stroke-width="0.6"/><path d="M206.3 113.8 v7.3 M203.1 115.6 l6.3 3.6 M203.1 119.2 l6.3 -3.6" stroke="#fff" stroke-width="1.3"/></g><g opacity="0.75"><path d="M227.2 105.5 C227.2 101.4 231.5 100.2 234.7 100.4 C237.9 100.7 239.7 102.0 243.3 101.8 C247.6 101.7 248.7 104.3 248.7 106.6 C248.7 109.6 246.5 111.9 244.0 111.9 C241.2 111.9 240.1 109.3 236.9 109.6 C233.6 109.8 232.6 111.7 229.8 111.3 C227.6 111.0 227.2 108.4 227.2 105.5Z" fill="#bddfbd" stroke="#8a8a8a" stroke-width="1.1"/></g><g opacity="0.75"><rect x="238.9" y="111.9" width="11.0" height="11.0" rx="1" fill="#5b86c0" stroke="#45699a" stroke-width="0.6"/><path d="M240.4 116.2 h4 v-2.5 l4 4 l-4 4 v-2.5 h-4z" fill="#fff"/></g><g opacity="0.6"><path d="M267 119.5 L273.9 105.2 H286" fill="none" stroke="#444" stroke-width="0.9"/><circle cx="273.9" cy="105.2" r="3" fill="#b8dcb0" stroke="#666" stroke-width="0.8"/><path d="M276 109 L286 121" stroke="#d49040" stroke-width="2.8"/><path d="M286 109 L275.5 121" stroke="#e0d040" stroke-width="1.6"/></g><rect x="305.2" y="102.2" width="14.6" height="14.4" fill="#efe08e" stroke="#d0b040" stroke-width="0.9" stroke-dasharray="1.5 1"/><g opacity="0.75"><rect x="316.0" y="113.0" width="9.8" height="9.8" rx="2" fill="#d93a3a" stroke="#b82a2a" stroke-width="0.6"/><path d="M318.5 115.5 l4.8 4.8 M323.3 115.5 l-4.8 4.8" stroke="#fff" stroke-width="1.6"/></g><g opacity="0.7"><path d="M340.5 104 L357 114.5 M340.5 117.5 L357 108" stroke="#777" stroke-width="1"/><ellipse cx="360" cy="107" rx="3.8" ry="2.4" fill="none" stroke="#d04040" stroke-width="1.4" transform="rotate(-30 360 107)"/><ellipse cx="360" cy="116" rx="3.8" ry="2.4" fill="none" stroke="#d04040" stroke-width="1.4" transform="rotate(30 360 116)"/></g><g opacity="0.55"><path d="M387.0 102.0 H394.5 L397.5 105.0 V116.0 H387.0 Z M394.5 102.0 V105.0 H397.5" fill="#f3f3f3" stroke="#777" stroke-width="1.0" stroke-linejoin="round" opacity="1.00"/><path d="M381.5 105.0 H389.5 L392.5 108.0 V119.5 H381.5 Z M389.5 105.0 V108.0 H392.5" fill="#f3f3f3" stroke="#777" stroke-width="1.0" stroke-linejoin="round" opacity="1.00"/><path d="M383.5 111 h7 M383.5 113 h7 M383.5 115 h7 M383.5 117 h7" stroke="#777" stroke-width="0.7"/></g><g opacity="0.6"><rect x="420.4" y="101.5" width="15.4" height="19.4" fill="#eee4d6" stroke="#c89a5a" stroke-width="1"/><rect x="424.5" y="100.2" width="7.5" height="3" fill="#fff" stroke="#c89a5a" stroke-width="0.8"/><path d="M422.5 104.5 H430.5 L433.5 107.5 V119.0 H422.5 Z M430.5 104.5 V107.5 H433.5" fill="#f3f3f3" stroke="#777" stroke-width="1.0" stroke-linejoin="round" opacity="1.00"/></g><rect x="453.9" y="98.9" width="1.6" height="1.6" fill="#fff" opacity="0.9"/><rect x="454.9" y="99.9" width="2" height="2" fill="#a8a8a8"/><rect x="456.9" y="101.9" width="1.6" height="1.6" fill="#fff" opacity="0.9"/><rect x="457.9" y="102.9" width="2" height="2" fill="#a8a8a8"/><rect x="453.9" y="104.9" width="1.6" height="1.6" fill="#fff" opacity="0.9"/><rect x="454.9" y="105.9" width="2" height="2" fill="#a8a8a8"/><rect x="456.9" y="107.9" width="1.6" height="1.6" fill="#fff" opacity="0.9"/><rect x="457.9" y="108.9" width="2" height="2" fill="#a8a8a8"/><rect x="453.9" y="110.9" width="1.6" height="1.6" fill="#fff" opacity="0.9"/><rect x="454.9" y="111.9" width="2" height="2" fill="#a8a8a8"/><rect x="456.9" y="113.9" width="1.6" height="1.6" fill="#fff" opacity="0.9"/><rect x="457.9" y="114.9" width="2" height="2" fill="#a8a8a8"/><rect x="453.9" y="116.9" width="1.6" height="1.6" fill="#fff" opacity="0.9"/><rect x="454.9" y="117.9" width="2" height="2" fill="#a8a8a8"/><rect x="456.9" y="119.9" width="1.6" height="1.6" fill="#fff" opacity="0.9"/><rect x="457.9" y="120.9" width="2" height="2" fill="#a8a8a8"/><g opacity="1.00"><path d="M463.2 108.3 L467.7 102.8 H484.0 V113.8 H467.7 Z" fill="#f3d633" stroke="#c9a400" stroke-width="1"/><text x="468.7" y="111.5" font-family="Liberation Sans" font-weight="bold" font-size="8.6" fill="#222" textLength="13.8" lengthAdjust="spacingAndGlyphs">abc</text></g><g opacity="1.00"><path d="M502.5 108.3 L507.0 103.6 H519.5 V113.1 H507.0 Z" fill="#f3d633" stroke="#c9a400" stroke-width="1"/><text x="508.0" y="110.8" font-family="Liberation Sans" font-weight="bold" font-size="8" fill="#222">ab</text></g><circle cx="519" cy="115.6" r="4" fill="#b01818" stroke="#8a1010" stroke-width="0.6"/><path d="M517.5 109 v4" stroke="#ddd" stroke-width="1.2"/><g opacity="0.60"><path d="M539.0 108.5 L543.5 103.2 H560.0 V113.9 H543.5 Z" fill="#f3d633" stroke="#c9a400" stroke-width="1"/><text x="544.5" y="111.6" font-family="Liberation Sans" font-weight="bold" font-size="8" fill="#222">ab</text></g><circle cx="557.6" cy="117" r="5" fill="#c04848" opacity="0.6"/><g opacity="0.60"><path d="M577.0 108.5 L581.5 103.2 H598.0 V113.9 H581.5 Z" fill="#f3d633" stroke="#c9a400" stroke-width="1"/><text x="582.5" y="111.6" font-family="Liberation Sans" font-weight="bold" font-size="8.6" fill="#222" textLength="14.0" lengthAdjust="spacingAndGlyphs">abc</text></g><g opacity="0.7"><path d="M584.8 117.9 Q592.4 111.5 600 117.9 Q592.4 124.3 584.8 117.9Z" fill="#fff" stroke="#666" stroke-width="0.8"/><circle cx="592.4" cy="117.9" r="2.6" fill="#6b9bd3"/><circle cx="592.4" cy="117.9" r="1" fill="#222"/></g><g opacity="0.60"><path d="M615.0 108.5 L619.5 103.2 H636.0 V113.9 H619.5 Z" fill="#f3d633" stroke="#c9a400" stroke-width="1"/><text x="620.5" y="111.6" font-family="Liberation Sans" font-weight="bold" font-size="8.6" fill="#222" textLength="14.0" lengthAdjust="spacingAndGlyphs">abc</text></g><g opacity="0.70"><rect x="627.8" y="111.8" width="11.2" height="11.2" rx="1" fill="#5b86c0" stroke="#45699a" stroke-width="0.6"/><path d="M629.3 116.2 h4 v-2.5 l4 4 l-4 4 v-2.5 h-4z" fill="#fff"/></g><g opacity="0.60"><path d="M653.0 108.5 L657.5 103.2 H674.0 V113.9 H657.5 Z" fill="#f3d633" stroke="#c9a400" stroke-width="1"/><text x="658.5" y="111.6" font-family="Liberation Sans" font-weight="bold" font-size="8.6" fill="#222" textLength="14.0" lengthAdjust="spacingAndGlyphs">abc</text></g><g opacity="0.70"><rect x="665.7" y="111.8" width="11.2" height="11.2" rx="1" fill="#5b86c0" stroke="#45699a" stroke-width="0.6"/><path d="M674.5 116.9 A3.3 3.3 0 1 0 669.8 120.6" fill="none" stroke="#fff" stroke-width="1.3"/><path d="M672.9 114.8 l2.2 -1.8 l0.6 2.6z" fill="#fff"/></g><g opacity="0.60"><path d="M691.0 108.5 L695.5 103.2 H712.0 V113.9 H695.5 Z" fill="#f3d633" stroke="#c9a400" stroke-width="1"/><text x="696.5" y="111.6" font-family="Liberation Sans" font-weight="bold" font-size="8.6" fill="#222" textLength="14.0" lengthAdjust="spacingAndGlyphs">abc</text></g><g opacity="0.7"><rect x="703.6" y="111.8" width="11.2" height="11.2" rx="1" fill="#d8b838" stroke="#c0a020" stroke-width="0.6"/><path d="M706 121 l6.5 -6.5" stroke="#fff" stroke-width="1.6"/></g><rect x="728.4" y="98.9" width="1.6" height="1.6" fill="#fff" opacity="0.9"/><rect x="729.4" y="99.9" width="2" height="2" fill="#a8a8a8"/><rect x="731.4" y="101.9" width="1.6" height="1.6" fill="#fff" opacity="0.9"/><rect x="732.4" y="102.9" width="2" height="2" fill="#a8a8a8"/><rect x="728.4" y="104.9" width="1.6" height="1.6" fill="#fff" opacity="0.9"/><rect x="729.4" y="105.9" width="2" height="2" fill="#a8a8a8"/><rect x="731.4" y="107.9" width="1.6" height="1.6" fill="#fff" opacity="0.9"/><rect x="732.4" y="108.9" width="2" height="2" fill="#a8a8a8"/><rect x="728.4" y="110.9" width="1.6" height="1.6" fill="#fff" opacity="0.9"/><rect x="729.4" y="111.9" width="2" height="2" fill="#a8a8a8"/><rect x="731.4" y="113.9" width="1.6" height="1.6" fill="#fff" opacity="0.9"/><rect x="732.4" y="114.9" width="2" height="2" fill="#a8a8a8"/><rect x="728.4" y="116.9" width="1.6" height="1.6" fill="#fff" opacity="0.9"/><rect x="729.4" y="117.9" width="2" height="2" fill="#a8a8a8"/><rect x="731.4" y="119.9" width="1.6" height="1.6" fill="#fff" opacity="0.9"/><rect x="732.4" y="120.9" width="2" height="2" fill="#a8a8a8"/><rect x="741.4" y="98.9" width="1.6" height="1.6" fill="#fff" opacity="0.9"/><rect x="742.4" y="99.9" width="2" height="2" fill="#a8a8a8"/><rect x="744.4" y="101.9" width="1.6" height="1.6" fill="#fff" opacity="0.9"/><rect x="745.4" y="102.9" width="2" height="2" fill="#a8a8a8"/><rect x="741.4" y="104.9" width="1.6" height="1.6" fill="#fff" opacity="0.9"/><rect x="742.4" y="105.9" width="2" height="2" fill="#a8a8a8"/><rect x="744.4" y="107.9" width="1.6" height="1.6" fill="#fff" opacity="0.9"/><rect x="745.4" y="108.9" width="2" height="2" fill="#a8a8a8"/><rect x="741.4" y="110.9" width="1.6" height="1.6" fill="#fff" opacity="0.9"/><rect x="742.4" y="111.9" width="2" height="2" fill="#a8a8a8"/><rect x="744.4" y="113.9" width="1.6" height="1.6" fill="#fff" opacity="0.9"/><rect x="745.4" y="114.9" width="2" height="2" fill="#a8a8a8"/><rect x="741.4" y="116.9" width="1.6" height="1.6" fill="#fff" opacity="0.9"/><rect x="742.4" y="117.9" width="2" height="2" fill="#a8a8a8"/><rect x="744.4" y="119.9" width="1.6" height="1.6" fill="#fff" opacity="0.9"/><rect x="745.4" y="120.9" width="2" height="2" fill="#a8a8a8"/><rect x="63.9" y="134.9" width="1.6" height="1.6" fill="#fff" opacity="0.9"/><rect x="64.9" y="135.9" width="2" height="2" fill="#a8a8a8"/><rect x="66.9" y="137.9" width="1.6" height="1.6" fill="#fff" opacity="0.9"/><rect x="67.9" y="138.9" width="2" height="2" fill="#a8a8a8"/><rect x="63.9" y="140.9" width="1.6" height="1.6" fill="#fff" opacity="0.9"/><rect x="64.9" y="141.9" width="2" height="2" fill="#a8a8a8"/><rect x="66.9" y="143.9" width="1.6" height="1.6" fill="#fff" opacity="0.9"/><rect x="67.9" y="144.9" width="2" height="2" fill="#a8a8a8"/><rect x="63.9" y="146.9" width="1.6" height="1.6" fill="#fff" opacity="0.9"/><rect x="64.9" y="147.9" width="2" height="2" fill="#a8a8a8"/><rect x="66.9" y="149.9" width="1.6" height="1.6" fill="#fff" opacity="0.9"/><rect x="67.9" y="150.9" width="2" height="2" fill="#a8a8a8"/><rect x="63.9" y="152.9" width="1.6" height="1.6" fill="#fff" opacity="0.9"/><rect x="64.9" y="153.9" width="2" height="2" fill="#a8a8a8"/><rect x="66.9" y="155.9" width="1.6" height="1.6" fill="#fff" opacity="0.9"/><rect x="67.9" y="156.9" width="2" height="2" fill="#a8a8a8"/><g opacity="0.6"><path d="M77 145.5 L85 137.5 V141.5 C93 141.5 95.5 146 94.5 150.5 C93.5 153.5 89.5 154 86 153.5 C89.5 152 91 149 88 147.5 C87 147 86 147 85 147 V152 Z" fill="#b5dcb5" stroke="#7aaa7a" stroke-width="0.9"/><path d="M133 145.5 L125 137.5 V141.5 C117 141.5 114.5 146 115.5 150.5 C116.5 153.5 120.5 154 124 153.5 C120.5 152 119 149 122 147.5 C123 147 124 147 125 147 V152 Z" fill="#b5dcb5" stroke="#7aaa7a" stroke-width="0.9"/></g><g opacity="0.70"><path d="M151.2 141.5 C151.2 137.6 155.5 136.5 158.7 136.7 C161.9 136.9 163.7 138.2 167.3 138.1 C171.6 138.0 172.7 140.4 172.7 142.7 C172.7 145.5 170.5 147.7 168.0 147.7 C165.2 147.7 164.1 145.2 160.9 145.5 C157.6 145.7 156.6 147.5 153.8 147.1 C151.6 146.8 151.2 144.3 151.2 141.5Z" fill="#bddfbd" stroke="#8a8a8a" stroke-width="1.1"/></g><g opacity="0.75"><rect x="162.8" y="147.7" width="11.0" height="11.0" rx="1" fill="#5b86c0" stroke="#45699a" stroke-width="0.6"/><path d="M171.5 152.7 A3.3 3.3 0 1 0 166.8 156.4" fill="none" stroke="#fff" stroke-width="1.3"/><path d="M169.9 150.6 l2.2 -1.8 l0.6 2.6z" fill="#fff"/></g><g opacity="0.65"><circle cx="196" cy="142.8" r="7.5" fill="#c6e6c6" stroke="#8a8a8a" stroke-width="1"/><path d="M198.5 143.3 L205.3 143.3 L209 150.8 L205.3 158.3 L198.5 158.3 L194.7 150.8Z" fill="#b8d0e6" stroke="#6a8aa0" stroke-width="1"/><path d="M193 145 C197 141 202 143 202 151" fill="none" stroke="#555" stroke-width="0.9"/></g><g opacity="0.70"><path d="M227.3 140.5 C227.3 136.6 231.7 135.5 235.0 135.7 C238.3 135.9 240.1 137.2 243.8 137.1 C248.2 137.0 249.3 139.4 249.3 141.7 C249.3 144.5 247.1 146.7 244.5 146.7 C241.6 146.7 240.5 144.2 237.2 144.5 C233.9 144.7 232.8 146.5 229.9 146.1 C227.7 145.8 227.3 143.3 227.3 140.5Z" fill="#bddfbd" stroke="#8a8a8a" stroke-width="1.1"/><ellipse cx="233.9" cy="140.5" rx="4.4" ry="3.0" fill="#f4f4f4" stroke="#8a8a8a" stroke-width="1" transform="rotate(-12 233.9 140.5)"/></g><g opacity="0.70"><rect x="239.0" y="148.2" width="10.8" height="10.8" rx="2" fill="#cfa600" stroke="#b48f00" stroke-width="0.6"/><path d="M244.4 150.0 v7.1 M241.3 151.8 l6.2 3.6 M241.3 155.4 l6.2 -3.6" stroke="#fff" stroke-width="1.3"/></g><g opacity="0.70"><path d="M265.3 140.8 C265.3 136.7 269.7 135.5 272.9 135.7 C276.2 136.0 277.9 137.3 281.7 137.1 C286.0 137.0 287.1 139.6 287.1 141.9 C287.1 144.9 284.9 147.2 282.3 147.2 C279.5 147.2 278.4 144.6 275.1 144.9 C271.8 145.1 270.8 147.0 267.9 146.6 C265.7 146.3 265.3 143.7 265.3 140.8Z" fill="#cdcdcd" stroke="#8a8a8a" stroke-width="1.1"/></g><path d="M265.5 157 C263 154 267 147.5 273 148 C277 149.5 275 156 271 157.5 C269 158.5 267 158.5 265.5 157Z" fill="#b7dcb7" stroke="#8a8a8a" stroke-width="1" opacity="0.7"/><g opacity="0.70"><rect x="277.1" y="148.2" width="10.8" height="10.8" rx="2" fill="#cfa600" stroke="#b48f00" stroke-width="0.6"/><path d="M282.5 150.0 v7.1 M279.4 151.8 l6.2 3.6 M279.4 155.4 l6.2 -3.6" stroke="#fff" stroke-width="1.3"/></g><g opacity="0.70"><path d="M303.2 140.8 C303.2 136.7 307.6 135.5 310.9 135.7 C314.2 136.0 316.0 137.3 319.7 137.1 C324.1 137.0 325.2 139.6 325.2 141.9 C325.2 144.9 323.0 147.2 320.4 147.2 C317.5 147.2 316.4 144.6 313.1 144.9 C309.8 145.1 308.7 147.0 305.8 146.6 C303.6 146.3 303.2 143.7 303.2 140.8Z" fill="#bddfbd" stroke="#8a8a8a" stroke-width="1.1"/><ellipse cx="309.8" cy="140.8" rx="4.4" ry="3.2" fill="#f4f4f4" stroke="#8a8a8a" stroke-width="1" transform="rotate(-12 309.8 140.8)"/></g><g opacity="0.50"><rect x="316.0" y="149.2" width="9.8" height="9.8" rx="2" fill="#d93a3a" stroke="#b82a2a" stroke-width="0.6"/><path d="M318.5 151.7 l4.8 4.8 M323.3 151.7 l-4.8 4.8" stroke="#fff" stroke-width="1.6"/></g><g opacity="0.70"><path d="M341.0 140.8 C341.0 136.7 345.4 135.5 348.6 135.7 C351.9 136.0 353.6 137.3 357.4 137.1 C361.7 137.0 362.8 139.6 362.8 141.9 C362.8 144.9 360.6 147.2 358.0 147.2 C355.2 147.2 354.1 144.6 350.8 144.9 C347.5 145.1 346.4 147.0 343.6 146.6 C341.4 146.3 341.0 143.7 341.0 140.8Z" fill="#cdcdcd" stroke="#8a8a8a" stroke-width="1.1"/></g><path d="M341 157 C338.5 154 342.5 147.5 348.5 148 C352.5 149.5 350.5 156 346.5 157.5 C344.5 158.5 342.5 158.5 341 157Z" fill="#b7dcb7" stroke="#8a8a8a" stroke-width="1" opacity="0.7"/><g opacity="0.50"><rect x="353.8" y="149.2" width="9.8" height="9.8" rx="2" fill="#d93a3a" stroke="#b82a2a" stroke-width="0.6"/><path d="M356.3 151.7 l4.8 4.8 M361.1 151.7 l-4.8 4.8" stroke="#fff" stroke-width="1.6"/></g><g opacity="0.7"><path d="M380 139 C384 135.5 392 137 396 137 C401 136.5 401.5 142 399 145.5 C397 148 393 146 390 147 C386 148 385 153.5 381 153.5 C379 151 379 144 380 139Z" fill="#b5dcb5" stroke="#888" stroke-width="1"/><path d="M381 153.5 C380 151 379.5 148.5 380 146.5 L389 148 C386 150 385 153 381 153.5Z" fill="#e8d860"/></g><g opacity="0.75"><path d="M419 137.5 C424 134.5 433 137 437 137.5 C441 138 441.5 146 438.5 149.5 C435.5 152.5 431.5 147.5 427.5 148.5 C423.5 149.5 420.5 152.5 417.5 150 C415.5 147 415.5 140.5 419 137.5Z" fill="#b5dcb5" stroke="#e6d458" stroke-width="2.6"/></g><g opacity="0.7"><path d="M456 137 C459 134.5 463 135.5 464 137.5 L462 146.5 C459 147.5 455.5 147 455 144 C454.5 141 454.5 139 456 137Z M467 138 C469 135.5 474 135.5 475.5 138.5 C476.5 142 475.5 146 472 147 L467 147Z" fill="#b5dcb5" stroke="#888" stroke-width="1"/><path d="M466 136 L463.5 151 M466 136 L468.5 151" stroke="#888" stroke-width="0.9"/><ellipse cx="462.3" cy="155" rx="1.6" ry="3.6" fill="none" stroke="#cc3333" stroke-width="1.2" transform="rotate(15 462.3 155)"/><ellipse cx="471" cy="154.5" rx="1.6" ry="3.6" fill="none" stroke="#cc3333" stroke-width="1.2" transform="rotate(-30 471 154.5)"/></g><g opacity="0.7"><path d="M494 137.5 C497 134.5 503 135 504 137 V147 C501 148.5 497 150 495 148 C492 145 492 140 494 137.5Z M506 137 C508 134.5 514 135 515.5 138 C516.5 141.5 515.5 146.5 512.5 148 L506 145Z" fill="#b5dcb5" stroke="#888" stroke-width="1"/><path d="M502.5 139 h4.5 M502.5 142 h4.5 M502.5 145 h4.5 M505 147 C505 150 502 152 505.5 154 C508 156 504 158 507 158.5" fill="none" stroke="#888" stroke-width="1"/></g><g opacity="0.65"><path d="M541 136 L550 135.5 L553 136.5 L545 146.5 L542 147.5 L540 143 Z" fill="#c8c8c8" stroke="#888" stroke-width="0.9"/><rect x="532.2" y="153.5" width="18.8" height="5.4" fill="#a9bccb" stroke="#6e8596" stroke-width="0.9"/><path d="M541.5 149 L540 153.5 L541.5 156 L543 153.5Z" fill="#f0e080" stroke="#888" stroke-width="0.6"/></g><g opacity="0.7"><path d="M575 154 A9 9 0 1 1 587 143.5" fill="none" stroke="#5b93d8" stroke-width="2.6"/><path d="M591.5 142 L584.5 140.5 L587 147.5Z" fill="#5b93d8"/></g><rect x="65.0" y="172.0" width="2" height="2" fill="#b4b4b4"/><rect x="66.5" y="173.5" width="1" height="1" fill="#fff"/><rect x="68.0" y="174.5" width="2" height="2" fill="#b4b4b4"/><rect x="69.5" y="176.0" width="1" height="1" fill="#fff"/><rect x="71.0" y="172.0" width="2" height="2" fill="#b4b4b4"/><rect x="72.5" y="173.5" width="1" height="1" fill="#fff"/><rect x="74.0" y="174.5" width="2" height="2" fill="#b4b4b4"/><rect x="75.5" y="176.0" width="1" height="1" fill="#fff"/><rect x="77.0" y="172.0" width="2" height="2" fill="#b4b4b4"/><rect x="78.5" y="173.5" width="1" height="1" fill="#fff"/><rect x="80.0" y="174.5" width="2" height="2" fill="#b4b4b4"/><rect x="81.5" y="176.0" width="1" height="1" fill="#fff"/><rect x="83.0" y="172.0" width="2" height="2" fill="#b4b4b4"/><rect x="84.5" y="173.5" width="1" height="1" fill="#fff"/><rect x="86.0" y="174.5" width="2" height="2" fill="#b4b4b4"/><rect x="87.5" y="176.0" width="1" height="1" fill="#fff"/><rect x="89.0" y="172.0" width="2" height="2" fill="#b4b4b4"/><rect x="90.5" y="173.5" width="1" height="1" fill="#fff"/><rect x="92.0" y="174.5" width="2" height="2" fill="#b4b4b4"/><rect x="93.5" y="176.0" width="1" height="1" fill="#fff"/><rect x="95.0" y="172.0" width="2" height="2" fill="#b4b4b4"/><rect x="96.5" y="173.5" width="1" height="1" fill="#fff"/><rect x="98.0" y="174.5" width="2" height="2" fill="#b4b4b4"/><rect x="99.5" y="176.0" width="1" height="1" fill="#fff"/><g opacity="1.00"><path d="M70.5 183.5 L77.2 199.0 L83.8 183.5 H91.5" fill="none" stroke="#3d5a78" stroke-width="1.3"/><circle cx="70.5" cy="183.5" r="1.8" fill="#fff" stroke="#3d5a78" stroke-width="1.1"/><circle cx="77.2" cy="199.0" r="1.8" fill="#fff" stroke="#3d5a78" stroke-width="1.1"/><circle cx="83.8" cy="183.5" r="1.8" fill="#fff" stroke="#3d5a78" stroke-width="1.1"/><circle cx="91.5" cy="183.5" r="1.8" fill="#fff" stroke="#3d5a78" stroke-width="1.1"/></g><rect x="83.4" y="196.5" width="9.5" height="9.5" rx="2" fill="#4f9a55" stroke="#3d7d43" stroke-width="0.8"/><path d="M85.4 201.2 h5.5 M88.2 198.5 v5.5" stroke="#fff" stroke-width="2.2"/><rect x="69.6" y="220.3" width="6.4" height="6.3" fill="#27466c"/><rect x="76.0" y="220.3" width="6.4" height="6.3" fill="#6f9ed4"/><rect x="82.4" y="220.3" width="6.4" height="6.3" fill="#27466c"/><rect x="69.6" y="226.6" width="6.4" height="6.3" fill="#6f9ed4"/><rect x="76.0" y="226.6" width="6.4" height="6.3" fill="#27466c"/><rect x="82.4" y="226.6" width="6.4" height="6.3" fill="#6f9ed4"/><rect x="69.6" y="232.9" width="6.4" height="6.3" fill="#27466c"/><rect x="76.0" y="232.9" width="6.4" height="6.3" fill="#6f9ed4"/><rect x="82.4" y="232.9" width="6.4" height="6.3" fill="#27466c"/><rect x="83.6" y="234.5" width="9.5" height="9.5" rx="2" fill="#4f9a55" stroke="#3d7d43" stroke-width="0.8"/><path d="M85.6 239.2 h5.5 M88.3 236.5 v5.5" stroke="#fff" stroke-width="2.2"/><path d="M70.2 264.5 C68.8 259.5 72.5 257.2 77 258.4 C80.5 257 86.3 257.6 86.8 262.2 C87.1 265 86.2 267.2 84.3 268.2 L85.8 269.4 L83.2 270.2 C82.3 272.5 81.6 274.3 80 275.2 C78.4 275.7 77.4 274.3 78 272.2 L78.4 268.8 C76.2 268.8 74.2 268.3 73 267.3 C71.6 266.6 70.6 265.6 70.2 264.5Z" fill="#6b96cc" stroke="#2c4e78" stroke-width="1.1"/><path d="M73.5 260.5 C72.5 263 73 265.5 75 266.5 M80.5 259.5 C79 262 79 266 80 270 M84 260 C85 262 85 265 83.5 267" fill="none" stroke="#2c4e78" stroke-width="0.9"/><rect x="83.6" y="272.5" width="9.5" height="9.5" rx="2" fill="#4f9a55" stroke="#3d7d43" stroke-width="0.8"/><path d="M85.6 277.2 h5.5 M88.3 274.5 v5.5" stroke="#fff" stroke-width="2.2"/><path d="M69 319.5 C72 311 79 301 91.5 296 C90 303 85 313 73.5 316 Z" fill="#8fb6e4" stroke="#2c4e78" stroke-width="1"/><path d="M69 319.5 L86 300" stroke="#2c4e78" stroke-width="0.8"/><rect x="83.6" y="310.8" width="9.5" height="9.5" rx="2" fill="#4f9a55" stroke="#3d7d43" stroke-width="0.8"/><path d="M85.6 315.6 h5.5 M88.3 312.8 v5.5" stroke="#fff" stroke-width="2.2"/><path d="M69 334 C80 333 90 339 92 349 C85 348 76 350 69 355.5 C73 348 73.5 340 69 334Z" fill="#5d8ac2" stroke="#2c4e78" stroke-width="1"/><path d="M75 334.5 C78 340 78 346 75.5 352 M81 336 C84 340 84.5 345 82.5 350 M87 340 C89 343 89 346 88 349" fill="none" stroke="#2c4e78" stroke-width="0.9"/><rect x="83.6" y="348.6" width="9.5" height="9.5" rx="2" fill="#4f9a55" stroke="#3d7d43" stroke-width="0.8"/><path d="M85.6 353.4 h5.5 M88.3 350.6 v5.5" stroke="#fff" stroke-width="2.2"/><ellipse cx="80.5" cy="381.5" rx="11.5" ry="10" fill="#a8c8ec" stroke="#5a88c0" stroke-width="1"/><path d="M69 381.5 h23 M80.5 371.5 v20 M71 376 h19 M71 387 h19" stroke="#e8f0fa" stroke-width="0.8"/><path d="M74 377 h4 v3 h-4z M82 378 h5 v4 h-5z M76 384 h3 v4 h-3z" fill="#2c4e78"/><rect x="83.6" y="386.8" width="9.5" height="9.5" rx="2" fill="#4f9a55" stroke="#3d7d43" stroke-width="0.8"/><path d="M85.6 391.6 h5.5 M88.3 388.8 v5.5" stroke="#fff" stroke-width="2.2"/><ellipse cx="80.5" cy="420" rx="11.8" ry="10.2" fill="#2c4e78"/><ellipse cx="80.5" cy="420" rx="6" ry="10" fill="#7aa6dc"/><path d="M69 420 h23 M71 415 h19 M71 425 h19" stroke="#fff" stroke-width="1"/><path d="M80.5 410 v20" stroke="#2c4e78" stroke-width="1"/><rect x="83.6" y="424.5" width="9.5" height="9.5" rx="2" fill="#4f9a55" stroke="#3d7d43" stroke-width="0.8"/><path d="M85.6 429.2 h5.5 M88.3 426.5 v5.5" stroke="#fff" stroke-width="2.2"/><ellipse cx="80.5" cy="458" rx="11.5" ry="10" fill="#eaf1fa" stroke="#5a88c0" stroke-width="1.1"/><path d="M69 458 h23 M80.5 448 v20 M71 453 h19 M71 463 h19 M75 449 C72 453 72 463 75 467 M86 449 C89 453 89 463 86 467" fill="none" stroke="#8ab0dc" stroke-width="0.8"/><path d="M72.5 451 L78 465 L83 451 H88" fill="none" stroke="#222" stroke-width="1.1"/><circle cx="72.5" cy="451" r="1.3" fill="#fff" stroke="#222" stroke-width="0.8"/><circle cx="78" cy="465" r="1.3" fill="#fff" stroke="#222" stroke-width="0.8"/><circle cx="83" cy="451" r="1.3" fill="#fff" stroke="#222" stroke-width="0.8"/><circle cx="88" cy="451" r="1.3" fill="#fff" stroke="#222" stroke-width="0.8"/><rect x="83.6" y="462.8" width="9.5" height="9.5" rx="2" fill="#4f9a55" stroke="#3d7d43" stroke-width="0.8"/><path d="M85.6 467.6 h5.5 M88.3 464.8 v5.5" stroke="#fff" stroke-width="2.2"/><path d="M77.5 488.5 C82 487.5 85 490.5 84.5 494 C84 498 79 502.5 74.5 504.5 C77 501 78.5 498.5 78 496.5 C75 496 73.5 494 74 491.5 C74.5 489.5 76 488.8 77.5 488.5Z" fill="#5d8ac2" stroke="#2c4e78" stroke-width="0.9"/><rect x="83.6" y="500.2" width="9.5" height="9.5" rx="2" fill="#4f9a55" stroke="#3d7d43" stroke-width="0.8"/><path d="M85.6 504.9 h5.5 M88.3 502.2 v5.5" stroke="#fff" stroke-width="2.2"/><g opacity="1.00"><path d="M70.0 524.5 L76.7 540.0 L83.3 524.5 H91.0" fill="none" stroke="#3d5a78" stroke-width="1.3"/><circle cx="70.0" cy="524.5" r="1.8" fill="#fff" stroke="#3d5a78" stroke-width="1.1"/><circle cx="76.7" cy="540.0" r="1.8" fill="#fff" stroke="#3d5a78" stroke-width="1.1"/><circle cx="83.3" cy="524.5" r="1.8" fill="#fff" stroke="#3d5a78" stroke-width="1.1"/><circle cx="91.0" cy="524.5" r="1.8" fill="#fff" stroke="#3d5a78" stroke-width="1.1"/></g><g opacity="1.00"><rect x="83.8" y="538.2" width="9.4" height="9.4" rx="2" fill="#cfa600" stroke="#b48f00" stroke-width="0.6"/><path d="M88.5 539.8 v6.2 M85.8 541.3 l5.4 3.1 M85.8 544.5 l5.4 -3.1" stroke="#fff" stroke-width="1.3"/></g><path d="M94.8 538 h7.6 l-3.8 7z" fill="#555"/><rect x="70.5" y="564" width="19" height="19" fill="#efefef" stroke="#555" stroke-width="1"/><rect x="83.8" y="576" width="9.2" height="8.8" rx="2.2" fill="#e84848"/><path d="M85.8 580.4 h5.2" stroke="#fff" stroke-width="2"/><rect x="65.0" y="599.0" width="2" height="2" fill="#b4b4b4"/><rect x="66.5" y="600.5" width="1" height="1" fill="#fff"/><rect x="68.0" y="601.5" width="2" height="2" fill="#b4b4b4"/><rect x="69.5" y="603.0" width="1" height="1" fill="#fff"/><rect x="71.0" y="599.0" width="2" height="2" fill="#b4b4b4"/><rect x="72.5" y="600.5" width="1" height="1" fill="#fff"/><rect x="74.0" y="601.5" width="2" height="2" fill="#b4b4b4"/><rect x="75.5" y="603.0" width="1" height="1" fill="#fff"/><rect x="77.0" y="599.0" width="2" height="2" fill="#b4b4b4"/><rect x="78.5" y="600.5" width="1" height="1" fill="#fff"/><rect x="80.0" y="601.5" width="2" height="2" fill="#b4b4b4"/><rect x="81.5" y="603.0" width="1" height="1" fill="#fff"/><rect x="83.0" y="599.0" width="2" height="2" fill="#b4b4b4"/><rect x="84.5" y="600.5" width="1" height="1" fill="#fff"/><rect x="86.0" y="601.5" width="2" height="2" fill="#b4b4b4"/><rect x="87.5" y="603.0" width="1" height="1" fill="#fff"/><rect x="89.0" y="599.0" width="2" height="2" fill="#b4b4b4"/><rect x="90.5" y="600.5" width="1" height="1" fill="#fff"/><rect x="92.0" y="601.5" width="2" height="2" fill="#b4b4b4"/><rect x="93.5" y="603.0" width="1" height="1" fill="#fff"/><rect x="95.0" y="599.0" width="2" height="2" fill="#b4b4b4"/><rect x="96.5" y="600.5" width="1" height="1" fill="#fff"/><rect x="98.0" y="601.5" width="2" height="2" fill="#b4b4b4"/><rect x="99.5" y="603.0" width="1" height="1" fill="#fff"/></svg>
<!-- map -->
<div class="a" style="left:401px;top:166px;width:1576px;height:1011px;background:#fff;overflow:hidden"><svg class="abs" style="left:0;top:0" width="1576" height="1011" viewBox="401 166 1576 1011">
<g fill="#d8fdb4" stroke="#8ad076" stroke-width="1" fill-rule="evenodd" stroke-linejoin="round">
<path d="M539.2 267.3 L1686.4 190.0 L1471.1 288.6 L1580.2 363.2 L1601.8 384.4 L1580.2 386.6 L1271.1 382.4 L1262.8 405.1 L1234.2 406.0 L1198.2 385.9 L1143.7 397.1 L1138.3 408.4 L1114.7 408.4 L1108.3 344.9 L1074.6 332.8 L1027.4 331.0 L986.0 331.7 L866.6 343.5 L820.3 314.0 L681.7 285.9 L569.6 301.6Z"/>
<path d="M1005.0 386.0 L1012.5 390.5 L1012.0 392.0 L1006.0 391.8Z"/>
<path d="M962.5 717.4 L967.4 722.6 L977.3 722.6 L991.3 714.5 L1025.1 669.8 L1036.8 677.3 L1047.9 669.8 L1030.7 697.7 L1008.3 717.0 L1030.8 724.8 L1042.6 712.5 L1065.1 681.5 L1084.2 662.8 L1129.4 637.8 L1137.8 631.5 L1154.6 623.9 L1163.0 618.3 L1223.5 599.2 L1241.7 583.0 L1214.4 555.8 L1243.7 530.0 L1262.5 540.7 L1281.5 523.9 L1231.6 490.2 L1199.9 514.8 L1195.3 504.3 L1165.0 500.3 L1151.9 512.8 L1064.0 535.6 L1028.3 568.9 L1029.7 574.0 L1015.2 582.6 L1027.7 596.8 L1018.6 602.8 L1017.2 608.3 L1024.7 624.4 L1018.6 630.5 L1019.6 646.6Z"/>
<path d="M1075.2 590.5 L1081.2 583.4 L1083.5 582.8 L1086.9 588.1 L1078.2 593.5Z"/>
<path d="M1166.0 597.8 L1181.7 581.4 L1193.8 589.1 L1184.2 600.2 L1169.0 600.2Z"/>
<path d="M1188.2 585.1 L1193.8 578.6 L1197.9 581.4 L1191.8 587.1Z"/>
<path d="M1185.5 554.8 L1187.5 554.6 L1187.2 556.0 L1185.8 556.0Z"/>
<path d="M1084.0 602.3 L1085.6 602.4 L1085.2 603.5Z"/>
<path d="M1028.4 651.8 L1029.8 652.0 L1029.0 653.0Z"/>
<path d="M1113.5 486.8 L1120.0 480.7 L1124.6 487.2 L1118.0 487.6Z"/>
<path d="M1239.7 477.7 L1247.7 487.8 L1242.3 484.1Z"/>
<path d="M1255.2 557.2 L1256.8 557.8 L1257.2 564.9 L1259.9 565.9 L1258.2 577.4 L1252.8 577.6Z"/>
<path d="M1089.3 670.4 L1147.8 653.3 L1157.9 656.1 L1171.6 652.3 L1185.8 659.1 L1197.9 687.0 L1192.2 699.1 L1182.1 702.5 L1175.1 701.7 L1168.0 703.5 L1152.9 694.5 L1140.3 722.9 L1154.3 747.5 L1159.1 746.5 L1164.6 755.8 L1155.8 767.1 L1138.0 774.5 L1139.5 787.0 L1115.9 796.3 L1106.6 797.3 L1101.2 793.7 L1095.3 784.5 L1082.0 792.9 L1072.7 784.1 L1090.9 757.5 L1098.2 742.0 L1086.4 727.3 L1091.6 719.9 L1080.5 710.3 L1083.6 680.9 L1090.9 675.9Z"/>
<path d="M1095.3 689.0 L1098.4 690.0 L1104.8 696.1 L1101.8 698.7 L1095.3 692.0Z"/>
<path d="M1102.3 705.9 L1106.0 702.2 L1110.5 706.2 L1106.6 709.6Z"/>
<path d="M992.0 771.2 L1009.7 780.8 L1000.9 809.1 L989.1 830.5 L970.9 823.9 L981.3 787.0Z"/>
<path d="M1190.7 721.4 L1210.8 723.6 L1208.4 735.1 L1189.2 732.7Z"/>
<path d="M885.3 951.6 L917.8 919.8 L967.6 862.8 L977.9 860.1 L987.6 850.0 L995.0 843.8 L1003.8 842.3 L1026.7 842.3 L1030.4 832.7 L1054.0 798.1 L1103.4 817.6 L1120.8 813.1 L1203.0 742.8 L1268.3 741.6 L1355.0 819.6 L1334.1 841.0 L1343.2 846.6 L1385.8 806.5 L1406.7 818.8 L1426.1 811.7 L1398.6 795.0 L1400.3 792.0 L1351.1 761.0 L1361.7 748.3 L1355.5 740.4 L1387.5 763.0 L1417.0 779.0 L1446.5 788.8 L1478.4 795.5 L1574.3 799.2 L1617.3 796.2 L1629.6 801.9 L1653.0 823.2 L1659.1 826.2 L1666.5 826.2 L1675.1 822.0 L1686.2 820.8 L1702.1 825.2 L1677.6 845.4 L1668.5 887.9 L1723.0 939.8 L1713.2 958.3 L1685.0 988.5 L1668.2 992.7 L1660.4 1011.1 L1660.4 1023.9 L1654.2 1037.4 L1509.2 1070.1 L1498.1 1083.6 L1503.5 1116.1 L1475.5 1134.5 L1459.5 1122.2 L1374.7 1151.7 L1292.9 1132.1 L1284.2 1129.1 L1276.1 1124.7 L1269.5 1132.1 L1265.8 1127.9 L1250.3 1121.0 L1207.8 1123.6 L1200.6 1121.5 L1180.1 1109.9 L1156.5 1093.1 L1151.7 1083.5 L1151.7 1073.8 L1159.2 1056.3 L1190.2 1031.7 L1158.4 1011.7 L1113.9 1000.4 L1097.1 1001.6 L1085.0 1007.2 L1062.2 1007.2 L1054.5 996.1 L1040.5 1000.4 L1029.0 1003.5 L1028.5 1018.5 L1022.5 1034.1 L981.5 1064.9 L951.5 1080.6 L934.6 1087.1 L926.2 1087.1 L885.3 1070.2 L877.3 1054.6 L884.1 1025.7 L896.1 1000.4 L898.0 981.2 L893.7 963.1Z"/>
<path d="M1655.4 440.2 L1657.1 443.7 L1663.1 446.5 L1663.8 449.7 L1669.7 449.3 L1678.1 446.2 L1680.2 447.9 L1690.7 449.3 L1695.6 448.3 L1707.5 450.0 L1715.8 454.6 L1720.0 458.8 L1723.5 463.3 L1745.0 472.7 L1752.1 476.0 L1755.4 475.0 L1760.5 477.3 L1752.1 489.7 L1749.3 498.6 L1695.6 474.1 L1691.4 475.5 L1668.3 479.0 L1653.0 480.3 L1645.3 479.0 L1637.2 474.1 L1636.9 471.3 L1639.3 459.1 L1649.5 447.6Z"/>
<path d="M1695.6 474.8 L1749.3 499.4 L1756.8 503.7 L1753.5 516.3 L1729.3 506.0 L1725.5 501.3 L1717.6 497.6 L1715.3 487.8 L1706.4 486.4 L1697.6 482.2 L1692.5 477.6Z"/>
<path d="M1635.5 476.2 L1633.0 479.7 L1633.4 486.7 L1664.8 508.4 L1670.8 504.2 L1680.9 500.3 L1681.6 495.8 L1671.1 485.3 L1668.3 480.4 L1653.0 481.0 L1645.3 479.8 L1637.5 475.0Z"/>
<path d="M1669.0 480.4 L1690.7 477.6 L1694.9 483.9 L1701.5 490.9 L1701.9 496.5 L1699.8 498.6 L1683.7 499.6 L1681.6 493.0 L1671.1 485.3Z"/>
<path d="M1706.8 486.7 L1715.5 487.4 L1717.9 498.2 L1725.6 502.1 L1724.9 506.3 L1705.4 502.1Z"/>
<path d="M1689.0 504.1 L1695.8 505.8 L1698.0 513.7 L1696.9 520.5 L1687.9 525.0Z"/>
<path d="M1725.5 506.9 L1753.5 516.3 L1757.2 506.0 L1761.6 507.0 L1766.7 509.3 L1768.6 514.1 L1799.9 527.7 L1802.9 539.5 L1801.0 540.0 L1798.6 555.0 L1799.5 570.0 L1788.1 566.4 L1786.7 554.3 L1769.6 550.7 L1755.7 539.5 L1748.3 529.9 L1736.3 525.0 L1731.6 516.3 L1728.3 509.7Z"/>
<path d="M1782.2 508.2 L1794.0 498.9 L1837.5 510.7 L1804.3 540.2 L1802.9 539.5 L1799.9 527.7 L1768.6 514.1 L1766.7 509.3 L1761.6 507.0Z"/>
<path d="M1805.1 540.2 L1820.6 531.4 L1828.7 531.4 L1833.1 538.8 L1834.6 546.2 L1825.2 552.1 L1829.5 557.1 L1825.2 570.7 L1820.2 574.2 L1817.3 578.5 L1803.8 585.6 L1802.4 568.5 L1800.5 554.3Z"/>
<path d="M1763.8 477.5 L1777.1 472.4 L1786.6 471.3 L1794.0 472.4 L1796.6 474.6 L1796.2 476.8 L1804.3 484.2 L1808.8 482.3 L1823.5 490.1 L1822.1 493.0 L1799.9 489.3 L1782.2 508.2 L1760.8 504.8 L1752.5 501.0 L1749.8 498.9 L1753.1 488.6 L1760.8 484.2Z"/>
<path d="M1799.9 489.7 L1823.2 494.1 L1820.6 505.2 L1794.0 498.9Z"/>
<path d="M1825.0 491.2 L1837.9 498.6 L1837.5 501.1 L1822.1 505.2Z"/>
<path d="M1686.7 525.0 L1700.3 520.5 L1718.4 523.3 L1722.9 528.4 L1727.4 523.9 L1734.2 531.8 L1739.5 542.0 L1743.9 561.4 L1745.3 567.8 L1751.8 575.6 L1751.8 581.6 L1725.4 577.4 L1721.1 622.7 L1676.9 612.0 L1681.9 556.1 L1685.5 540.0Z"/>
<path d="M1634.1 560.7 L1644.1 556.8 L1661.2 556.4 L1671.2 567.1 L1676.2 578.5 L1669.8 579.2 L1666.2 582.5 L1645.5 581.3 L1642.0 581.3 L1634.1 565.7Z"/>
<path d="M1663.4 556.4 L1681.9 556.1 L1679.8 579.9 L1674.1 568.5Z"/>
<path d="M1631.3 569.2 L1634.1 567.8 L1642.7 581.3 L1637.0 585.6 L1629.9 574.9Z"/>
<path d="M1642.7 582.8 L1666.2 582.5 L1671.2 579.9 L1676.2 579.9 L1678.3 587.0 L1675.5 599.9 L1662.7 608.4 L1652.7 617.7 L1649.8 599.9 L1642.0 589.9Z"/>
<path d="M1641.3 591.3 L1649.8 602.7 L1651.2 614.1 L1644.1 621.3 L1637.7 594.9Z"/>
<path d="M1649.8 617.0 L1652.7 617.7 L1662.7 608.4 L1675.5 601.3 L1676.9 611.3 L1671.2 614.1 L1662.7 625.5 L1661.2 621.3 L1649.8 621.3Z"/>
<path d="M1678.3 591.3 L1684.0 594.2 L1687.6 599.9 L1685.5 605.6 L1676.9 609.9 L1676.2 601.3Z"/>
<path d="M1672.6 612.7 L1682.6 614.1 L1675.5 632.7 L1676.9 637.0 L1682.6 639.8 L1679.0 646.6 L1664.1 637.7 L1663.4 625.5Z"/>
<path d="M1683.3 640.5 L1691.2 641.9 L1701.1 639.4 L1718.3 640.5 L1719.0 643.4 L1713.3 644.8 L1702.6 644.1 L1695.4 647.2 L1688.3 645.5Z"/>
<path d="M1756.0 592.5 L1763.2 593.9 L1745.3 622.7 L1743.2 634.1 L1727.5 645.5 L1726.8 649.8 L1723.2 646.9 L1725.4 639.8 L1745.3 614.1Z"/>
<path d="M1574.0 580.2 L1589.5 582.6 L1606.6 588.3 L1614.0 592.0 L1614.3 584.7 L1625.4 585.5 L1625.8 591.6 L1627.0 595.7 L1629.4 597.7 L1634.3 599.8 L1635.6 605.5 L1631.5 612.0 L1632.7 615.3 L1632.3 621.0 L1629.4 622.6 L1624.5 623.8 L1617.2 621.8 L1614.0 619.3 L1609.5 617.7 L1607.4 614.4 L1571.5 587.9Z"/>
<path d="M1805.2 588.5 L1807.8 592.8 L1801.0 599.6 L1802.4 591.3Z"/>
<path d="M1833.7 574.9 L1808.8 645.5 L1805.2 628.4 L1803.1 615.6 L1808.1 607.0Z"/>
<path d="M1809.2 646.2 L1811.6 682.6 L1813.1 689.7 L1812.4 704.0 L1808.8 696.8 L1808.1 676.9Z"/>
<ellipse cx="603.5" cy="957.3" rx="36.2" ry="30"/>
<ellipse cx="1007.3" cy="380.5" rx="6.3" ry="2.2" transform="rotate(32 1007.3 380.5)"/>
<ellipse cx="1234.6" cy="482.9" rx="2.4" ry="4" transform="rotate(35 1234.6 482.9)"/>
<ellipse cx="1668.5" cy="460.5" rx="8.9" ry="7.5" fill="#fff"/>
<path fill="#fff" d="M1767.5 500.4 L1770.4 493.8 L1774.8 492.3 L1779.3 494.5 L1778.5 498.9 L1774.1 500.4Z"/>
<path fill="#fff" d="M1785.2 514.4 L1808.8 513.7 L1815.0 519.0 L1819.1 527.0 L1808.8 515.8 L1786.0 515.6Z"/>
</g>
<g fill="none" stroke="#8fd27a" stroke-width="1">
<path d="M1677 464.3 L1695.6 474.1"/>
<path d="M1606.6 588.3 C1615 592 1621 595 1624.5 599 C1627 602 1629.5 607 1631.3 611.5"/>
</g>
<g fill="#66ee55" stroke="#111" stroke-width="1.1">
<circle cx="1110.0" cy="579.2" r="2.6"/>
<circle cx="1135.0" cy="673.0" r="2.6"/>
<circle cx="1354.8" cy="739.8" r="2.6"/>
<circle cx="1363.0" cy="860.2" r="2.6"/>
<circle cx="1215.8" cy="1021.0" r="2.6"/>
<circle cx="1780.9" cy="766.9" r="2.6"/>
</g></svg></div>
<div class="a" style="left:401px;top:1176px;width:1576px;height:1px;background:#b0b0b0"></div>

<!-- status bar -->
<div class="a" style="left:57px;top:1177px;width:1920px;height:32px;background:#ececec;border-radius:0 0 5px 5px"></div>
<div class="a" style="left:57px;top:1176px;width:344px;height:1px;background:#ececec"></div>
<div class="a t13" style="left:63.4px;top:1184px;color:#000">Ready</div>
<div class="a t13" style="left:1012.3px;top:1184px;color:#1a1aee;text-decoration:underline">There is a new plugin available</div>
<div class="a" style="left:1200.2px;top:1183.2px;width:19.5px;height:19.4px;border:1.3px solid #8c8c8c;background:#f2f2f2"></div>
<svg class="a" style="left:1200px;top:1183px" width="20" height="20" viewBox="0 0 20 20">
  <ellipse cx="6.8" cy="6.4" rx="3" ry="4.6" fill="#fff" stroke="#111" stroke-width="1.5" transform="rotate(-25 6.8 6.4)"/>
  <ellipse cx="10.8" cy="13" rx="4.3" ry="3.8" fill="#fff" stroke="#111" stroke-width="1.5"/>
  <circle cx="11" cy="13.2" r="1.2" fill="#333"/>
  <path d="M7 4 L8 8.5" stroke="#111" stroke-width="1"/>
  <path d="M13 5 l1.5 -1 M15.5 3.2 l1 -0.8 M3 13 l1 -0.5" stroke="#333" stroke-width="0.8"/>
</svg>
<div class="a t13" style="left:1229.6px;top:1184px;color:#000">Coordinate:</div>
<div class="a" style="left:1306.2px;top:1183.3px;width:299.6px;height:19.3px;border:1.4px solid #959595;background:#fff"></div>
<div class="a t13" style="left:1306.2px;top:1185px;width:299.6px;text-align:center;color:#000">20.4298,-34.0123</div>
<div class="a t13" style="left:1615.5px;top:1184px;color:#000">Scale</div>
<div class="a" style="left:1661.2px;top:1187px;width:93.4px;height:14.6px;border:1.2px solid #a0a0a0;border-radius:0 5px 5px 0;background:linear-gradient(#fff,#fafafa)"></div>
<div class="a" style="left:1740.3px;top:1188px;width:1px;height:12.8px;background:#c4c4c4"></div>
<svg class="a" style="left:1743px;top:1192px" width="8" height="6" viewBox="0 0 8 6"><path d="M1 1 H6.5 L3.75 5Z" fill="#444"/></svg>
<div class="a t13" style="left:1663.8px;top:1186.5px;color:#000">1:24229</div>
<div class="a" style="left:1761.1px;top:1183.4px;width:19.7px;height:19.1px;border:1.2px solid #8c8c8c;background:#f0f0f0"></div>
<svg class="a" style="left:1761px;top:1183px" width="20" height="20" viewBox="0 0 20 20">
  <path d="M4 18 C8 15 12 11 17.5 2.5 C15 9 12 14 5 18.5Z" fill="#888" stroke="#555" stroke-width="0.6"/>
  <circle cx="7.5" cy="6.7" r="3.6" fill="none" stroke="#e32020" stroke-width="1.3"/>
  <path d="M5 4.4 L10 9" stroke="#e32020" stroke-width="1.3"/>
</svg>
<svg class="a" style="left:1786px;top:1183px" width="18" height="18" viewBox="0 0 18 18">
  <defs><linearGradient id="cbg2" x1="0" y1="0" x2="0" y2="1"><stop offset="0" stop-color="#f4f6f8"/><stop offset="1" stop-color="#c9d0d8"/></linearGradient></defs>
  <rect x="1.3" y="3.1" width="13.3" height="13.4" rx="2.2" fill="url(#cbg2)" stroke="#4d5966" stroke-width="1.1"/>
  <path d="M4 8.5 L7.8 12.3 L15 1.5" fill="none" stroke="#182230" stroke-width="2.2" stroke-linecap="round"/>
</svg>
<div class="a t13" style="left:1805.4px;top:1184px;color:#000">Render</div>
<div class="a t13" style="left:1853.4px;top:1184px;color:#444">EPSG:4326</div>
<div class="a" style="left:1931.2px;top:1184.2px;width:19.6px;height:17.5px;border:1.2px solid #8c8c8c;background:#f2f2f2"></div>
<svg class="a" style="left:1931px;top:1184px" width="20" height="18" viewBox="0 0 20 18">
  <circle cx="10" cy="8.8" r="7" fill="none" stroke="#8a8a8a" stroke-width="1.6"/>
  <ellipse cx="10" cy="8.8" rx="3.2" ry="7" fill="none" stroke="#8a8a8a" stroke-width="1.2"/>
  <path d="M3 8.8 h14" stroke="#8a8a8a" stroke-width="1.2"/>
  <rect x="7.5" y="6.3" width="5" height="5" fill="#ddd" stroke="#999" stroke-width="0.8"/>
</svg>
<svg class="a" style="left:1962px;top:1194px" width="15" height="15" viewBox="0 0 15 15">
  <path d="M2 14 L14 2 M6 14 L14 6 M10 14 L14 10" stroke="#777" stroke-width="1"/>
  <path d="M3 14 L14 3 M7 14 L14 7 M11 14 L14 11" stroke="#fff" stroke-width="0.7"/>
</svg>

</body></html>
